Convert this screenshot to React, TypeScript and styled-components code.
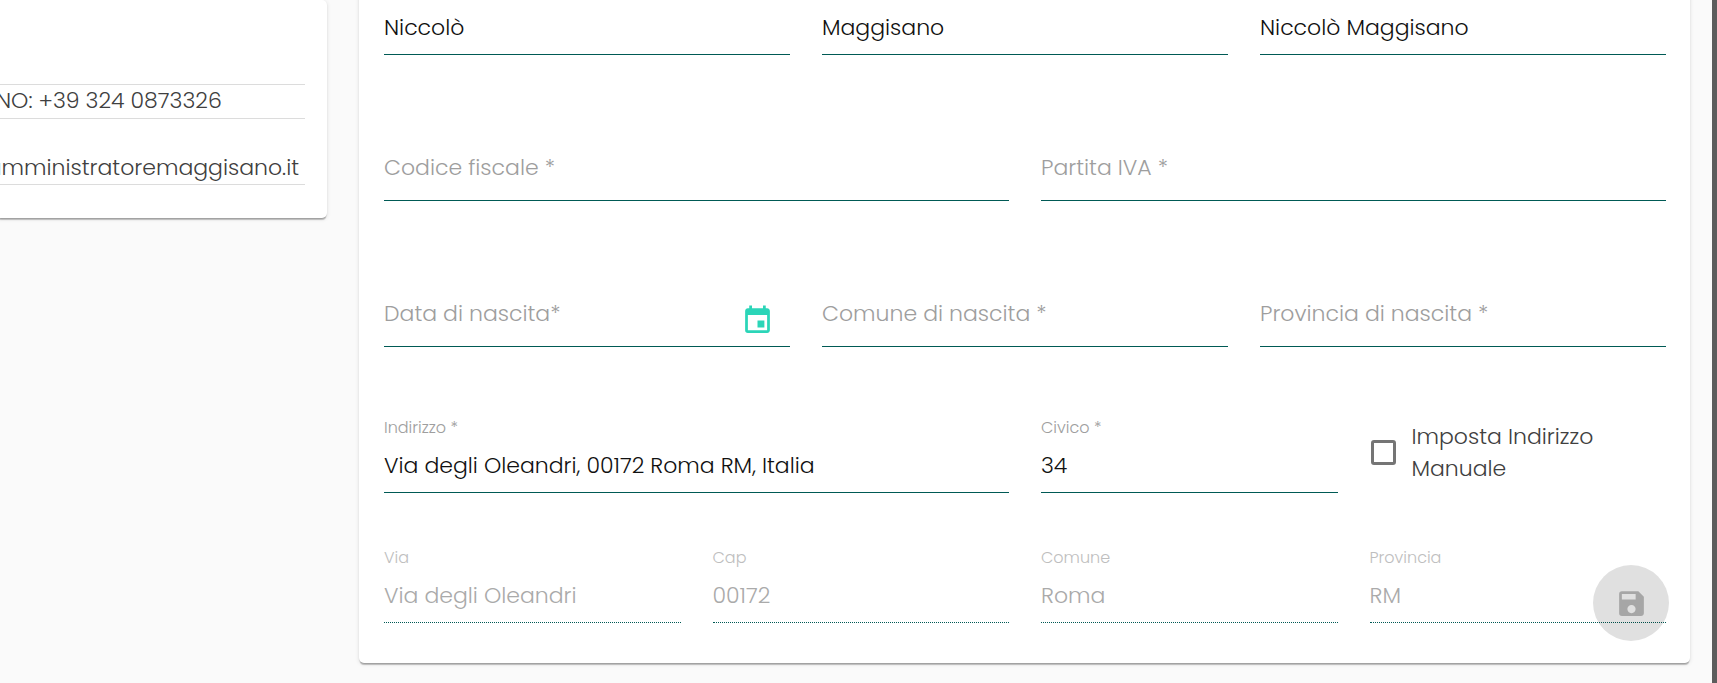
import React, { useId, useState } from "react";
import styled, { createGlobalStyle, css } from "styled-components";
import { MdEvent, MdSave } from "react-icons/md";

const GlobalStyle = createGlobalStyle`
  *, *::before, *::after { box-sizing: border-box; }
  body {
    margin: 0;
    background: #fafafa;
    color: #404040;
    font-family: Poppins, Inter, "Liberation Sans", sans-serif;
    font-size: 22px;
    font-weight: 300;
    line-height: 32px;
  }
  input, button { font: inherit; }
`;

const Page = styled.div`
  display: flex;
  align-items: flex-start;
  gap: 32px;
  min-height: 100vh;
  padding-right: 22px;
  border-right: 5px solid #5c5c5c;
  overflow: hidden;
`;

const Card = styled.div`
  background: #fff;
  border-radius: 5px;
  box-shadow: 0 3px 1px -1px rgba(0, 0, 0, 0.2), 0 1px 1px rgba(0, 0, 0, 0.14),
    0 1px 4px rgba(0, 0, 0, 0.12);
`;

const ContactCard = styled(Card)`
  flex: 0 0 331px;
  min-width: 0;
  margin-left: -4px;
  padding: 84px 22px 33px 0;
  display: flex;
  flex-direction: column;
  gap: 32px;
`;

const ContactRow = styled.div<{ $boxed?: boolean }>`
  display: flex;
  justify-content: flex-end;
  padding-right: 6px;
  border-bottom: 1px solid #dcdcdc;
  line-height: 33px;
  white-space: nowrap;
  ${(p) =>
    p.$boxed &&
    css`
      justify-content: flex-start;
      padding-bottom: 2px;
      border-top: 1px solid #dcdcdc;
      line-height: 31px;
    `}
`;

const FormCard = styled(Card)`
  flex: 1;
  min-width: 0;
  margin-top: -46px;
  padding: 24px 24px 40px 25px;
`;

const Form = styled.form`
  display: flex;
  flex-direction: column;
  gap: 69px;
`;

const AddressGroup = styled.div`
  display: flex;
  flex-direction: column;
  gap: 53px;
`;

const Row = styled.div`
  display: grid;
  grid-template-columns: repeat(12, minmax(0, 1fr));
  column-gap: 32px;
`;

const FieldBox = styled.div<{ $span: number }>`
  grid-column: span ${(p) => p.$span};
  position: relative;
  padding-top: 24px;
`;

const FieldLabel = styled.label<{ $resting: boolean; $disabled?: boolean }>`
  position: absolute;
  left: 0;
  white-space: nowrap;
  color: ${(p) => (p.$disabled ? "#bebebe" : "#9e9e9e")};
  ${(p) =>
    p.$resting
      ? css`
          bottom: 17px;
          pointer-events: none;
        `
      : css`
          top: 0;
          font-size: 16px;
          line-height: 24px;
        `}
`;

const FieldInput = styled.input`
  display: block;
  width: 100%;
  height: 53px;
  padding: 0 0 2px;
  border: 0;
  border-bottom: 1px solid #005a55;
  border-radius: 0;
  outline: 0;
  background: transparent;
  color: #111;
  &:disabled {
    border-bottom-style: dotted;
    color: #aaa;
  }
`;

const CalendarButton = styled.button`
  position: absolute;
  right: 16px;
  bottom: 10px;
  display: flex;
  padding: 0;
  border: 0;
  background: none;
  color: #2bd5b8;
  font-size: 33px;
`;

const CheckLabel = styled.label`
  grid-column: span 3;
  align-self: center;
  display: flex;
  align-items: center;
  gap: 16px;
  padding: 0 32px 4px 1px;
`;

const CheckBox = styled.input`
  appearance: none;
  flex: none;
  width: 25px;
  height: 25px;
  margin: 0;
  border: 3px solid #757575;
  border-radius: 3px;
  &:checked { background: #2bd5b8; }
`;

const SaveButton = styled.button`
  position: fixed;
  right: 48px;
  bottom: 42px;
  display: flex;
  align-items: center;
  justify-content: center;
  width: 76px;
  height: 76px;
  padding: 0;
  border: 0;
  border-radius: 50%;
  background: rgba(0, 0, 0, 0.12);
  color: rgba(0, 0, 0, 0.26);
  font-size: 33px;
`;

interface FieldProps {
  label: string;
  span: number;
  initial?: string;
  disabled?: boolean;
  children?: React.ReactNode;
}

function Field({ label, span, initial = "", disabled, children }: FieldProps) {
  const id = useId();
  const [value, setValue] = useState(initial);
  return (
    <FieldBox $span={span}>
      <FieldLabel htmlFor={id} $resting={!value} $disabled={disabled}>
        {label}
      </FieldLabel>
      <FieldInput
        id={id}
        type="text"
        value={value}
        disabled={disabled}
        onChange={(e) => setValue(e.target.value)}
      />
      {children}
    </FieldBox>
  );
}

export default function App() {
  return (
    <>
      <GlobalStyle />
      <Page>
        <ContactCard as="aside">
          <ContactRow $boxed>NO: +39 324 0873326</ContactRow>
          <ContactRow>amministratoremaggisano.it</ContactRow>
        </ContactCard>
        <FormCard as="main">
          <Form id="anagrafica" onSubmit={(e) => e.preventDefault()}>
            <Row>
              <Field span={4} label="Nome *" initial="Niccolò" />
              <Field span={4} label="Cognome *" initial="Maggisano" />
              <Field span={4} label="Ragione sociale *" initial="Niccolò Maggisano" />
            </Row>
            <Row>
              <Field span={6} label="Codice fiscale *" />
              <Field span={6} label="Partita IVA *" />
            </Row>
            <Row>
              <Field span={4} label="Data di nascita*">
                <CalendarButton type="button" aria-label="Apri calendario">
                  <MdEvent />
                </CalendarButton>
              </Field>
              <Field span={4} label="Comune di nascita *" />
              <Field span={4} label="Provincia di nascita *" />
            </Row>
            <AddressGroup>
              <Row>
                <Field span={6} label="Indirizzo *" initial="Via degli Oleandri, 00172 Roma RM, Italia" />
                <Field span={3} label="Civico *" initial="34" />
                <CheckLabel>
                  <CheckBox type="checkbox" />
                  <span>Imposta Indirizzo Manuale</span>
                </CheckLabel>
              </Row>
              <Row>
                <Field span={3} label="Via" initial="Via degli Oleandri" disabled />
                <Field span={3} label="Cap" initial="00172" disabled />
                <Field span={3} label="Comune" initial="Roma" disabled />
                <Field span={3} label="Provincia" initial="RM" disabled />
              </Row>
            </AddressGroup>
          </Form>
        </FormCard>
      </Page>
      <SaveButton type="submit" form="anagrafica" aria-label="Salva" disabled>
        <MdSave />
      </SaveButton>
    </>
  );
}
